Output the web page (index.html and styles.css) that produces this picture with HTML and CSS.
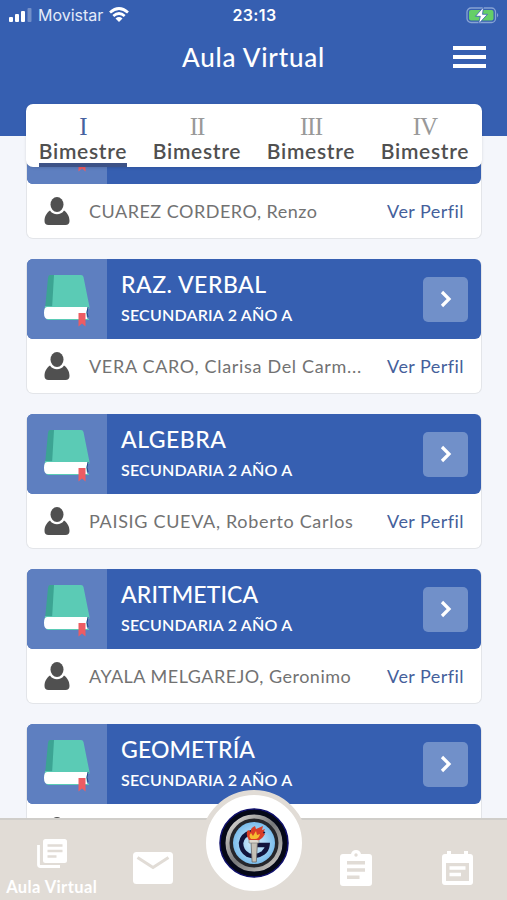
FILE: index.html
```html
<!DOCTYPE html>
<html lang="es">
<head>
    <meta charset="UTF-8">
    <meta name="viewport" content="width=device-width, initial-scale=1.0">
    <title>Aula Virtual</title>
    <link rel="stylesheet" href="styles.css">
</head>
<body>
    <svg class="symbols" aria-hidden="true">
        <symbol id="book" viewBox="0 0 80 80">
            <path d="M23 16h7l-5 35-7-1 3-31q.3-3 2-3z" fill="#3ca493"/>
            <path d="M27 16h27q2 0 2.500 2l6 30q.5 2-1.500 2H25z" fill="#5bcbb5"/>
            <path d="M18 47q-2 13 3 14h41v-1l-2-1V48z" fill="#5bcbb5"/>
            <path d="M20 48h41q-3 6-.5 12H21q-4 0-4-6t3-6z" fill="#fff"/>
            <path d="M61 48q-2 6 0 10" fill="none" stroke="#24458d"/>
            <path d="M51.500 54h7v13.500l-3.500-3-3.500 3z" fill="#ed5c62"/>
        </symbol>
        <symbol id="person" viewBox="0 0 26 28">
            <ellipse cx="13" cy="7.500" rx="6.500" ry="7.500"/>
            <path d="M6 13.500c3 5 11 5 14 0 3 2 5.500 5.500 5.500 10.500 0 2.500-1.500 4-4 4h-17c-2.500 0-4-1.500-4-4 0-5 2.500-8.500 5.500-10.500z"/>
        </symbol>
        <symbol id="arrow" viewBox="0 0 12 18">
            <path d="M2 2l7 7-7 7" fill="none" stroke="#fff" stroke-width="3.200"/>
        </symbol>
    </svg>

    <div class="app">
        <header>
            <div class="status">
                <div class="carrier">
                    <svg width="23" height="14" viewBox="0 0 23 14" fill="#fff">
                        <rect x="0" y="9" width="4" height="5" rx="1"/>
                        <rect x="6" y="6" width="4" height="8" rx="1"/>
                        <rect x="12" y="3" width="4" height="11" rx="1"/>
                        <rect x="18.500" y="0" width="4" height="14" rx="1" opacity=".3"/>
                    </svg>
                    <span>Movistar</span>
                    <svg width="20" height="16" viewBox="0 0 20 16" fill="none" stroke="#fff" stroke-width="2.700">
                        <path d="M1 5.500q9-8 18 0M4.300 9q5.700-5 11.400 0"/>
                        <path d="M6.500 11.500q3.500-2.800 7 0L10 15z" fill="#fff" stroke="none"/>
                    </svg>
                </div>
                <span class="time">23:13</span>
                <svg class="battery" width="34" height="17" viewBox="0 0 34 17">
                    <rect x="1" y="1" width="28.500" height="14.500" rx="4" fill="none" stroke="#87a3d4" stroke-width="1.300"/>
                    <rect x="3" y="3" width="24.500" height="10.500" rx="2" fill="#65cf67"/>
                    <path d="M31 6q2.500 2 0 4.500z" fill="#87a3d4"/>
                    <path d="M17.500 0L9.500 9.300h4.800L12.500 17l9-9.700h-5z" fill="#fff" stroke="#365fb1" stroke-width=".8"/>
                </svg>
            </div>
            <div class="title-bar">
                <h1>Aula Virtual</h1>
                <div class="menu"><i></i><i></i><i></i></div>
            </div>
        </header>

        <nav class="tabs">
            <a class="tab active"><b>I</b><span>Bimestre</span></a>
            <a class="tab"><b>II</b><span>Bimestre</span></a>
            <a class="tab"><b>III</b><span>Bimestre</span></a>
            <a class="tab"><b>IV</b><span>Bimestre</span></a>
        </nav>

        <main>
            <div class="courses">
                <section class="card">
                    <div class="card-head">
                        <div class="thumb"><svg width="80" height="80"><use href="#book"/></svg></div>
                    </div>
                    <div class="card-foot">
                        <svg class="person" width="26" height="28"><use href="#person"/></svg>
                        <span class="teacher">CUAREZ CORDERO, Renzo</span>
                        <a class="profile">Ver Perfil</a>
                    </div>
                </section>

                <section class="card">
                    <div class="card-head">
                        <div class="thumb"><svg width="80" height="80"><use href="#book"/></svg></div>
                        <div class="info"><h2>RAZ. VERBAL</h2><p>SECUNDARIA 2 AÑO A</p></div>
                        <div class="go"><svg width="12" height="18"><use href="#arrow"/></svg></div>
                    </div>
                    <div class="card-foot">
                        <svg class="person" width="26" height="28"><use href="#person"/></svg>
                        <span class="teacher wide">VERA CARO, Clarisa Del Carm...</span>
                        <a class="profile">Ver Perfil</a>
                    </div>
                </section>

                <section class="card">
                    <div class="card-head">
                        <div class="thumb"><svg width="80" height="80"><use href="#book"/></svg></div>
                        <div class="info"><h2>ALGEBRA</h2><p>SECUNDARIA 2 AÑO A</p></div>
                        <div class="go"><svg width="12" height="18"><use href="#arrow"/></svg></div>
                    </div>
                    <div class="card-foot">
                        <svg class="person" width="26" height="28"><use href="#person"/></svg>
                        <span class="teacher wide">PAISIG CUEVA, Roberto Carlos</span>
                        <a class="profile">Ver Perfil</a>
                    </div>
                </section>

                <section class="card">
                    <div class="card-head">
                        <div class="thumb"><svg width="80" height="80"><use href="#book"/></svg></div>
                        <div class="info"><h2 class="tight">ARITMETICA</h2><p>SECUNDARIA 2 AÑO A</p></div>
                        <div class="go"><svg width="12" height="18"><use href="#arrow"/></svg></div>
                    </div>
                    <div class="card-foot">
                        <svg class="person" width="26" height="28"><use href="#person"/></svg>
                        <span class="teacher">AYALA MELGAREJO, Geronimo</span>
                        <a class="profile">Ver Perfil</a>
                    </div>
                </section>

                <section class="card">
                    <div class="card-head">
                        <div class="thumb"><svg width="80" height="80"><use href="#book"/></svg></div>
                        <div class="info"><h2 class="tight">GEOMETRÍA</h2><p>SECUNDARIA 2 AÑO A</p></div>
                        <div class="go"><svg width="12" height="18"><use href="#arrow"/></svg></div>
                    </div>
                    <div class="card-foot">
                        <svg class="person" width="26" height="28"><use href="#person"/></svg>
                    </div>
                </section>
            </div>
        </main>

        <footer>
            <div class="item current">
                <svg width="30" height="30" viewBox="0 0 30 30">
                    <path d="M1.500 6v19.500q0 2 2 2H23" fill="none" stroke="#fff" stroke-width="2.800"/>
                    <rect x="6" y="0" width="24" height="24" rx="2.500" fill="#fff"/>
                    <path d="M10.500 6.500h15M10.500 12h15M10.500 17.500h9" stroke="#e1dcd6" stroke-width="2.500"/>
                </svg>
                <span>Aula Virtual</span>
            </div>
            <div class="item">
                <svg width="40" height="32" viewBox="0 0 40 32">
                    <rect width="40" height="32" rx="3.500" fill="#fff"/>
                    <path d="M4.500 5.500L20 15.500l15.500-10" fill="none" stroke="#e1dcd6" stroke-width="3"/>
                </svg>
            </div>
            <div class="item"></div>
            <div class="item">
                <svg width="32" height="36" viewBox="0 0 32 36">
                    <path d="M3 4h8q1-4 5-4t5 4h8q3 0 3 3v26q0 3-3 3H3q-3 0-3-3V7q0-3 3-3z" fill="#fff"/>
                    <circle cx="16" cy="5" r="1.700" fill="#e1dcd6"/>
                    <path d="M7 12.800h18M7 20h18M7 27.200h12.500" stroke="#e1dcd6" stroke-width="3.500"/>
                </svg>
            </div>
            <div class="item">
                <svg width="31" height="34" viewBox="0 0 31 34">
                    <path d="M3 3h2V0h4v3h13V0h4v3h2q3 0 3 3v25q0 3-3 3H3q-3 0-3-3V6q0-3 3-3z" fill="#fff"/>
                    <rect x="4" y="12" width="23" height="18" fill="#e1dcd6"/>
                    <path d="M7.500 17h16M7.500 23.500h11.500" stroke="#fff" stroke-width="3.600"/>
                </svg>
            </div>
        </footer>

        <div class="logo">
            <svg width="72" height="72" viewBox="0 0 72 72">
                <defs>
                    <linearGradient id="metal" x1="0" y1="0" x2="1" y2="1">
                        <stop offset="0" stop-color="#e4e1dc"/>
                        <stop offset=".5" stop-color="#77787a"/>
                        <stop offset="1" stop-color="#d0cdc8"/>
                    </linearGradient>
                    <radialGradient id="sky">
                        <stop offset="0" stop-color="#d9f0fd"/>
                        <stop offset="1" stop-color="#7bbdec"/>
                    </radialGradient>
                </defs>
                <circle cx="36" cy="36" r="34" fill="#050817" stroke="#10106c" stroke-width="1.500"/>
                <circle cx="36" cy="36" r="26.500" fill="#25262b" stroke="url(#metal)" stroke-width="4"/>
                <circle cx="36" cy="36" r="21" fill="url(#sky)"/>
                <path d="M46 27q-5-4-12-2-10 3-11 11 0 8 7 12 8 3 15-2 4-3 4.500-8H37" fill="none" stroke="#11143c" stroke-width="4.500"/>
                <path d="M33 35h6.500l-1.200 20h-4.200z" fill="#c5c0b6" stroke="#696868" stroke-width=".8"/>
                <path d="M31 32h10v4H31z" fill="#ded9cf" stroke="#777" stroke-width=".6"/>
                <path d="M31 33q-4-6-1-10l3 2q-1-4 4-6l1 3 7-3-1 4 3-1-2 4 2 1q-4 7-8 6z" fill="#d93e27"/>
                <path d="M33 32q-3-3 0-6l2 3 3-5 1 4 3-1q-1 5-5 5z" fill="#f5bd31"/>
            </svg>
        </div>
    </div>
</body>
</html>
```
FILE: styles.css
```css
* {
    box-sizing: border-box;
}
body {
    margin: 0;
    font-family: Lato, "Open Sans", sans-serif;
    background-color: #f4f6fb;
}
h1, h2, p {
    margin: 0;
}
svg {
    display: block;
    flex-shrink: 0;
}
.symbols {
    display: none;
}
.app {
    position: relative;
    width: 507px;
    height: 900px;
    overflow: hidden;
    display: flex;
    flex-direction: column;
}
header {
    height: 136px;
    flex-shrink: 0;
    background-color: #365fb1;
    color: white;
}
.status {
    display: grid;
    grid-template-columns: 1fr auto 1fr;
    align-items: center;
    height: 30px;
    padding: 0 7px 0 9px;
    font-family: Inter, sans-serif;
}
.carrier {
    display: flex;
    align-items: center;
    gap: 6px;
    font-size: 16px;
    color: #e4ebf9;
}
.time {
    font-size: 16px;
    font-weight: 600;
    letter-spacing: 0.4px;
}
.battery {
    justify-self: end;
}
.title-bar {
    display: grid;
    grid-template-columns: 1fr auto 1fr;
    align-items: center;
    height: 53px;
    padding: 0 21px;
}
h1 {
    grid-column: 2;
    font-size: 26px;
    font-weight: 500;
    letter-spacing: 0.8px;
}
.menu {
    justify-self: end;
    display: grid;
    gap: 5px;
}
.menu i {
    width: 33px;
    height: 4px;
    background-color: white;
}
.tabs {
    position: absolute;
    z-index: 2;
    top: 104px;
    left: 26px;
    width: 456px;
    height: 63px;
    display: flex;
    background-color: white;
    border-radius: 7px;
    box-shadow: 0 1px 3px rgba(0, 0, 0, 0.12);
}
.tab {
    flex: 1;
    display: flex;
    flex-direction: column;
    align-items: center;
    padding-top: 11px;
    color: #505050;
}
.tab b {
    font-family: "Liberation Serif", serif;
    font-size: 25px;
    line-height: 24px;
    font-weight: normal;
    letter-spacing: -1px;
    color: #999;
}
.tab span {
    height: 28px;
    font-size: 21px;
    line-height: 23px;
    font-weight: 600;
    letter-spacing: 0.7px;
}
.tab.active b {
    color: #45629f;
}
.tab.active span {
    border-bottom: 4px solid #3d5286;
}
main {
    flex: 1;
    min-height: 0;
    overflow: hidden;
}
.courses {
    margin-top: -32px;
    padding: 0 25px 0 26px;
    display: flex;
    flex-direction: column;
    gap: 20px;
}
.card {
    height: 135px;
    background-color: white;
    border: 1px solid #e3e5e9;
    border-top: none;
    border-radius: 7px;
    flex-shrink: 0;
}
.card-head {
    display: flex;
    align-items: center;
    height: 80px;
    background-color: #365fb1;
    color: white;
    border-radius: 6px;
    overflow: hidden;
}
.thumb {
    background-color: #5e7fc0;
}
.info {
    flex: 1;
    padding-left: 14px;
}
h2 {
    font-size: 23px;
    line-height: 29px;
    font-weight: 500;
    letter-spacing: 0.5px;
}
h2.tight {
    letter-spacing: 0.1px;
}
.info p {
    margin-top: 2px;
    font-size: 16px;
    line-height: 28px;
    font-weight: 600;
    letter-spacing: 0.2px;
}
.go {
    display: flex;
    align-items: center;
    justify-content: center;
    width: 45px;
    height: 45px;
    margin-right: 13px;
    background-color: #7190c9;
    border-radius: 5px;
}
.card-foot {
    display: flex;
    align-items: center;
    height: 53px;
    padding: 0 17px;
    font-size: 18px;
    color: #727272;
}
.person {
    fill: #505050;
}
.teacher {
    flex: 1;
    margin-left: 19px;
    white-space: nowrap;
    letter-spacing: 0.5px;
}
.teacher.wide {
    letter-spacing: 0.68px;
}
.profile {
    color: #455f9b;
    letter-spacing: 0.45px;
}
footer {
    display: grid;
    grid-template-columns: repeat(5, 1fr);
    height: 82px;
    flex-shrink: 0;
    background-color: #e1dcd6;
    border-top: 2px solid #d0ceca;
}
.item {
    display: flex;
    justify-content: center;
    align-items: center;
    padding: 16px 0 0 2px;
}
.item.current {
    flex-direction: column;
    gap: 8px;
    color: white;
    font-size: 16.5px;
    line-height: 21px;
    font-weight: 700;
    letter-spacing: 0.4px;
}
.logo {
    position: absolute;
    z-index: 3;
    left: 201px;
    top: 790px;
    width: 106px;
    height: 106px;
    display: flex;
    align-items: center;
    justify-content: center;
    background-color: white;
    border: 5px solid #e1dcd6;
    border-radius: 50%;
}
```
